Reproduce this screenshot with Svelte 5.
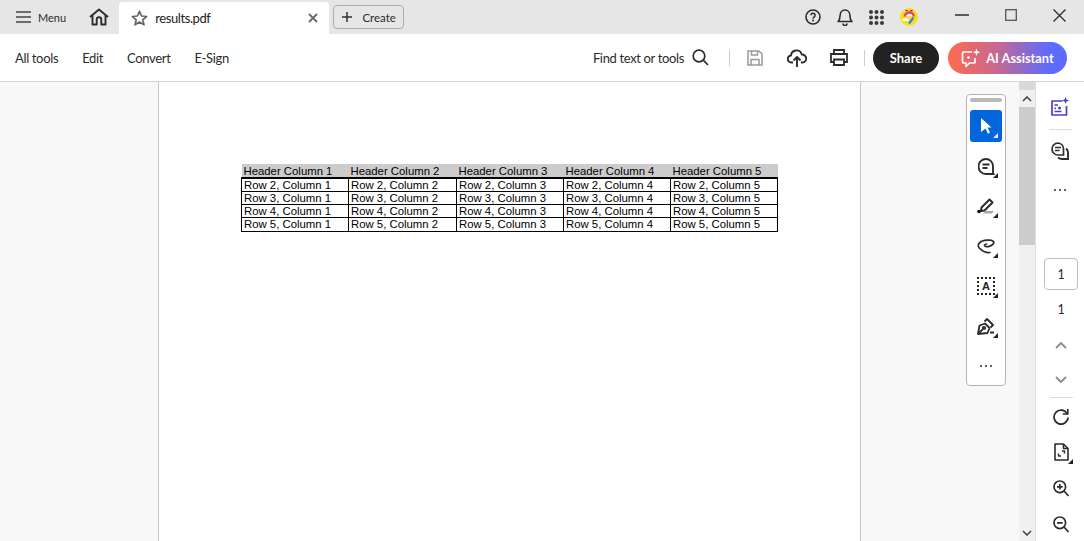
<script>
  const columns = [1, 2, 3, 4, 5];
  const rows = [2, 3, 4, 5];
  const colWidths = [107, 108, 107, 107, 107];
</script>

{#snippet corner()}
  <span class="corner"></span>
{/snippet}

<div class="app">
  <header class="titlebar">
    <button class="menu">
      <svg width="15" height="14" viewBox="0 0 15 14"><path d="M0 2h15M0 7h15M0 12h15" stroke="#444" stroke-width="1.700" fill="none"/></svg>
      <span>Menu</span>
    </button>
    <svg class="home" width="20" height="18" viewBox="0 0 20 18" fill="none" stroke="#2c2c2c" stroke-width="1.900" stroke-linejoin="round"><path d="M1 9 10 1.500 19 9M3.500 7.500v9h4.200v-5a2.300 2.300 0 0 1 4.600 0v5h4.200v-9"/></svg>
    <div class="tab">
      <svg width="17" height="16" viewBox="0 0 17 16" fill="none" stroke="#666" stroke-width="1.700" stroke-linejoin="round"><path d="M8.500 1.300 10.600 6l5 .5-3.800 3.300 1.200 5-4.500-2.700L4 14.800l1.200-5L1.400 6.500l5-.5z"/></svg>
      <span class="tab-name">results.pdf</span>
      <svg class="tab-close" width="10" height="10" viewBox="0 0 10 10"><path d="M1 1l8 8M9 1l-8 8" stroke="#6a6a6a" stroke-width="1.800"/></svg>
    </div>
    <button class="create">
      <svg width="12" height="12" viewBox="0 0 12 12"><path d="M6 1v10M1 6h10" stroke="#333" stroke-width="1.500"/></svg>
      <span>Create</span>
    </button>
    <div class="title-right">
      <svg width="16" height="16" viewBox="0 0 16 16" fill="none"><circle cx="8" cy="8" r="7" stroke="#2c2c2c" stroke-width="1.600"/><path d="M5.900 6.200a2.100 2 0 1 1 3.300 1.700C8.400 8.500 8 8.800 8 9.700" stroke="#2c2c2c" stroke-width="1.500"/><circle cx="8" cy="11.600" r="1" fill="#2c2c2c"/></svg>
      <svg width="16" height="18" viewBox="0 0 16 18" fill="none" stroke="#2c2c2c" stroke-width="1.600" stroke-linejoin="round"><path d="M1 13.500c1.600-1.300 2-2.500 2-5.500 0-3.500 2-6 5-6s5 2.500 5 6c0 3 .4 4.200 2 5.500z"/><path d="M6 15.500a2 2 0 0 0 4 0"/></svg>
      <svg width="15" height="15" viewBox="0 0 15 15" fill="#3a3a3a">
        {#each [2, 7.5, 13] as cy}
          {#each [2, 7.5, 13] as cx}
            <circle {cx} {cy} r="2"/>
          {/each}
        {/each}
      </svg>
      <svg width="18" height="18" viewBox="0 0 18 18"><circle cx="9" cy="9" r="9" fill="#f6e01c"/><path d="M3.500 8.500C4 4.500 7 3 9.500 3s5 1.500 5.500 5.500z" fill="#e8476f"/><path d="M6 8.500C6.500 6.500 8 6 9.500 6s3 .5 3 2.500z" fill="#fff"/><path d="M2 13c0-2.500 3-3.500 5-2.500 1.500 0 2 1 2 2.500z" fill="#fff"/><path d="M9 15.500l4.500-6" stroke="#2f86e0" stroke-width="2.200"/><path d="M5.500 2.500h2M10.500 2.500h2" stroke="#333" stroke-width="1"/></svg>
    </div>
    <div class="window-btns">
      <svg width="14" height="14" viewBox="0 0 14 14"><path d="M0 7h14" stroke="#2c2c2c" stroke-width="1.500"/></svg>
      <svg width="12" height="12" viewBox="0 0 12 12"><rect x=".7" y=".7" width="10.600" height="10.600" fill="none" stroke="#555" stroke-width="1.300"/></svg>
      <svg class="win-close" width="13" height="13" viewBox="0 0 13 13"><path d="M.5.500l12 12M12.500.500l-12 12" stroke="#2c2c2c" stroke-width="1.300"/></svg>
    </div>
  </header>

  <nav class="toolbar">
    <a>All tools</a>
    <a>Edit</a>
    <a>Convert</a>
    <a>E-Sign</a>
    <div class="toolbar-right">
      <span class="find">Find text or tools</span>
      <svg class="find-icon" width="17" height="17" viewBox="0 0 17 17" fill="none" stroke="#2c2c2c" stroke-width="1.700"><circle cx="7" cy="7" r="5.800"/><path d="M11.200 11.200 16 16"/></svg>
      <span class="sep first"></span>
      <svg class="save" width="16" height="16" viewBox="0 0 16 16" fill="none" stroke="#9a9a9a" stroke-width="1.500"><path d="M1 1h11l3 3v11H1z"/><path d="M4.500 1v4h6V1M4 15V9.500h8V15"/></svg>
      <svg class="upload" width="20" height="20" viewBox="0 0 20 20" fill="none" stroke="#2c2c2c" stroke-width="1.900" stroke-linejoin="round"><path d="M6 14.500H4.500a3.500 3.500 0 0 1-.5-7A5.500 5.500 0 0 1 14.800 6.500a4 4 0 0 1 .7 8H14"/><path d="M10 19V9.500M6.500 12.500 10 9l3.500 3.500"/></svg>
      <svg class="print" width="18" height="17" viewBox="0 0 18 17" fill="none" stroke="#2c2c2c" stroke-width="1.800"><path d="M4 5V1h10v4M4 13H1V5h16v8h-3"/><path d="M4 10.500h10V16H4z"/></svg>
      <span class="sep second"></span>
      <button class="share">Share</button>
      <button class="ai">
        <svg width="20" height="20" viewBox="0 0 20 20" fill="none" stroke="#fff" stroke-width="1.700" stroke-linejoin="round"><path d="M11 4H2.500a1 1 0 0 0-1 1v9a1 1 0 0 0 1 1H5v3.500L8.500 15H13a1 1 0 0 0 1-1v-4"/><circle cx="7.500" cy="9.500" r="1.300" fill="#fff" stroke="none"/><path d="M15.500.5l1 2.800 2.800 1-2.800 1-1 2.800-1-2.800-2.800-1 2.800-1z" fill="#fff" stroke="none"/></svg>
        <span>AI Assistant</span>
      </button>
    </div>
  </nav>

  <main class="workspace">
    <div class="gutter"></div>
    <section class="page">
      <table>
        <colgroup>
          {#each colWidths as w}
            <col style="width: {w}px" />
          {/each}
        </colgroup>
        <thead>
          <tr>
            {#each columns as c}
              <th>Header Column {c}</th>
            {/each}
          </tr>
        </thead>
        <tbody>
          {#each rows as r}
            <tr>
              {#each columns as c}
                <td>Row {r}, Column {c}</td>
              {/each}
            </tr>
          {/each}
        </tbody>
      </table>
    </section>

    <div class="canvas">
      <div class="quick-tools">
        <span class="grip"></span>
        <div class="qt active">
          <svg width="11" height="16" viewBox="0 0 11 16"><path d="M0 0l10.500 9.500H6.500L9 14.500l-2 1.200L4.500 10.500 0 14z" fill="#fff"/></svg>
          <span class="corner light"></span>
        </div>
        <div class="qt">
          <svg width="17" height="17" viewBox="0 0 17 17" fill="none" stroke="#2c2c2c" stroke-width="1.900"><path d="M8 1a7 7 0 1 0 0 15h7.500l-.5-1V8a7 7 0 0 0-7-7z"/><path d="M4.500 6.500h7M4.500 10h5"/></svg>
          {@render corner()}
        </div>
        <div class="qt">
          <svg width="18" height="16" viewBox="0 0 18 16" fill="none"><path d="M4.500 9.500 12.500 1.500l3 3-8 8-3.500.5z" stroke="#2c2c2c" stroke-width="2" stroke-linejoin="round"/><circle cx="2" cy="13.500" r="1.800" fill="#111"/><path d="M6 15.500l2.500-2.500H17l-2 2.500z" fill="#a8a8a8"/></svg>
          {@render corner()}
        </div>
        <div class="qt">
          <svg width="18" height="15" viewBox="0 0 18 15" fill="none" stroke="#2c2c2c" stroke-width="1.700" stroke-linecap="round"><path d="M4 10.500C1.500 9 .5 6.500 2 4.500 4 1.800 9 .8 13 1.200c3 .3 4.500 1.800 3.500 3.300C15 6.800 11 8.200 8.500 7.500 6.800 7 7.500 5 9.500 5M4 10.500c2 2 5.500 3.500 9 3"/></svg>
          {@render corner()}
        </div>
        <div class="qt">
          <span class="text-select">A</span>
          {@render corner()}
        </div>
        <div class="qt">
          <svg width="18" height="17" viewBox="0 0 18 17" fill="none" stroke="#2c2c2c" stroke-width="1.800" stroke-linejoin="round"><path d="M1 16 2.500 7.500 8 5.500l4.500 4.500L10.500 15z"/><path d="M7.500 3.500 10 1l6 6-2.500 2.500M1 16l4.500-4.500"/><circle cx="7" cy="10" r="1.200"/><path d="M13 14.500h4" stroke-width="2"/></svg>
          {@render corner()}
        </div>
        <div class="qt dots"><span></span><span></span><span></span></div>
      </div>
    </div>

    <div class="scrollbar">
      <span class="scroll-cap"></span>
      <span class="scroll-btn">
        <svg width="10" height="6" viewBox="0 0 10 6"><path d="M1 5l4-4 4 4" stroke="#444" stroke-width="1.600" fill="none"/></svg>
      </span>
      <span class="scroll-thumb"></span>
      <span class="scroll-btn bottom">
        <svg width="10" height="6" viewBox="0 0 10 6"><path d="M1 1l4 4 4-4" stroke="#444" stroke-width="1.600" fill="none"/></svg>
      </span>
    </div>

    <aside class="panel">
      <div class="top-icon first">
        <svg width="18" height="19" viewBox="0 0 18 19" fill="none" stroke="#4b3fc7" stroke-width="1.700" stroke-linejoin="round"><path d="M11.500 4H1v14h14.500V9"/><path d="M3.500 8h3.500M3.500 14.500h7M3.500 11.300h1.500"/><circle cx="8.500" cy="11" r="1.500" fill="#4b3fc7" stroke="none"/><path d="M14.500 0l1 2.500 2.500 1-2.500 1-1 2.500-1-2.500-2.500-1 2.500-1z" fill="#4b3fc7" stroke="none"/></svg>
      </div>
      <span class="rule top-icon"></span>
      <div class="top-icon comment">
        <svg width="18" height="18" viewBox="0 0 18 18" fill="none" stroke="#2c2c2c" stroke-width="1.700"><path d="M7 1a6 6 0 1 0 0 12h5.500V7A6 6 0 0 0 7 1z"/><path d="M4 5.500h6M4 8.500h4.500"/><path d="M15 6.500c1.300 1 2 2.500 2 4V17h-6a6 6 0 0 1-4-1.500" stroke-width="1.900"/></svg>
      </div>
      <div class="top-icon dots panel-dots"><span></span><span></span><span></span></div>
      <div class="page-box">1</div>
      <div class="page-total">1</div>
      <svg class="chev up" width="12" height="7" viewBox="0 0 12 7"><path d="M1 6l5-5 5 5" stroke="#8e8e8e" stroke-width="1.900" fill="none"/></svg>
      <svg class="chev down" width="12" height="7" viewBox="0 0 12 7"><path d="M1 1l5 5 5-5" stroke="#8e8e8e" stroke-width="1.900" fill="none"/></svg>
      <span class="rule lower"></span>
      <svg class="rotate" width="16" height="17" viewBox="0 0 16 17" fill="none" stroke="#2c2c2c" stroke-width="1.700"><path d="M14 5.500A7 7 0 1 0 15 9.500"/><path d="M14.800 1v5h-5" stroke-linejoin="round"/></svg>
      <div class="doc">
        <svg width="15" height="18" viewBox="0 0 15 18" fill="none" stroke="#2c2c2c" stroke-width="1.600" stroke-linejoin="round"><path d="M1 1h8.500L14 5.500V17H1z"/><path d="M9.500 1v4.500H14"/><path d="M8 8h2.500v2.500M7 13H4.500v-2.500" stroke-width="1.400"/></svg>
        <span class="corner"></span>
      </div>
      <svg class="zoom in" width="16" height="17" viewBox="0 0 16 17" fill="none" stroke="#2c2c2c" stroke-width="1.700"><circle cx="6.800" cy="6.800" r="5.800"/><path d="M11 11l4.500 5M4 6.800h5.600M6.800 4v5.600"/></svg>
      <svg class="zoom out" width="16" height="17" viewBox="0 0 16 17" fill="none" stroke="#2c2c2c" stroke-width="1.700"><circle cx="6.800" cy="6.800" r="5.800"/><path d="M11 11l4.500 5M4 6.800h5.600"/></svg>
    </aside>
  </main>
</div>

<style>
  :global(body) {
    margin: 0;
    overflow: hidden;
  }

  .app {
    width: 1084px;
    height: 541px;
    display: flex;
    flex-direction: column;
    overflow: hidden;
    font-family: Lato, "Noto Sans", sans-serif;
    color: #2c2c2c;
    background: #fff;
  }

  button {
    font: inherit;
    color: inherit;
    background: none;
    border: 0;
    padding: 0;
  }

  svg {
    display: block;
    flex: none;
  }

  /* Title bar */
  .titlebar {
    height: 34px;
    flex: none;
    background: #e6e6e6;
    display: flex;
    align-items: center;
    padding-left: 16px;
  }

  .menu {
    display: flex;
    align-items: center;
    gap: 7px;
    font-size: 11px;
  }

  .home {
    margin-left: 23px;
  }

  .tab {
    width: 210px;
    height: 32px;
    margin-left: 10px;
    align-self: flex-end;
    box-sizing: border-box;
    padding: 0 12px;
    display: flex;
    align-items: center;
    background: #fff;
    border-radius: 4px 4px 0 0;
  }

  .tab-name {
    margin-left: 7px;
    font-size: 13px;
    letter-spacing: -0.4px;
    color: #222;
  }

  .tab-close {
    margin-left: auto;
    margin-right: -1px;
  }

  .create {
    width: 71px;
    height: 24px;
    margin-left: 4px;
    box-sizing: border-box;
    border: 1px solid #adadad;
    border-radius: 4px;
    display: flex;
    align-items: center;
    justify-content: center;
    gap: 9px;
    font-size: 11.5px;
  }

  .title-right {
    margin-left: auto;
    display: flex;
    align-items: center;
    gap: 16px;
    margin-right: 37px;
  }

  .window-btns {
    display: flex;
    align-items: center;
    gap: 36px;
    margin-right: 18px;
    margin-top: -4px;
  }

  /* Tool bar */
  .toolbar {
    height: 47px;
    flex: none;
    border-bottom: 1px solid #d4d4d4;
    display: flex;
    align-items: center;
    gap: 24px;
    padding-left: 15px;
    font-size: 13px;
    letter-spacing: -0.35px;
  }

  .toolbar-right {
    margin-left: auto;
    margin-right: 17px;
    display: flex;
    align-items: center;
  }

  .find-icon {
    margin-left: 8px;
  }

  .sep {
    width: 1px;
    height: 16px;
    background: #cfcfcf;
  }

  .sep.first {
    margin-left: 20px;
  }

  .save {
    margin-left: 17px;
  }

  .upload {
    margin-left: 24px;
  }

  .print {
    margin-left: 23px;
  }

  .sep.second {
    margin-left: 16px;
  }

  .share {
    width: 66px;
    height: 32px;
    margin-left: 8px;
    background: #222;
    color: #fff;
    border-radius: 16px;
    font-weight: 700;
    font-size: 13px;
    letter-spacing: 0;
  }

  .ai {
    width: 119px;
    height: 32px;
    margin-left: 9px;
    border-radius: 16px;
    background: linear-gradient(90deg, #ff6a4d 0%, #c9688f 40%, #5d6bff 85%);
    color: #fff;
    font-weight: 700;
    font-size: 12.8px;
    letter-spacing: 0;
    display: flex;
    align-items: center;
    justify-content: center;
    gap: 5px;
  }

  /* Workspace */
  .workspace {
    flex: 1;
    min-height: 0;
    display: flex;
  }

  .gutter {
    width: 158px;
    flex: none;
    background: #f8f8f8;
    border-right: 1px solid #c8c8c8;
  }

  .page {
    width: 702px;
    flex: none;
    box-sizing: border-box;
    padding: 82px 0 0 82px;
    background: #fff;
    border-right: 1px solid #c8c8c8;
  }

  table {
    border-collapse: collapse;
    table-layout: fixed;
    width: 536px;
    font-family: "Liberation Sans", Arial, sans-serif;
    font-size: 11.35px;
    line-height: 12px;
    color: #000;
  }

  th {
    background: #ccc;
    font-weight: 400;
    text-align: left;
    padding: 1px 0 0 2px;
    height: 13px;
    box-sizing: border-box;
    border-bottom: 2px solid #000;
    white-space: nowrap;
    overflow: hidden;
  }

  td {
    padding: 0 0 0 2px;
    height: 13.2px;
    box-sizing: border-box;
    border: 1px solid #000;
    white-space: nowrap;
    overflow: hidden;
  }

  .canvas {
    width: 158px;
    flex: none;
    position: relative;
    background: #f8f8f8;
  }

  .quick-tools {
    position: absolute;
    top: 12px;
    right: 13px;
    width: 40px;
    height: 292px;
    box-sizing: border-box;
    background: #fff;
    border: 1px solid #b4b4b4;
    border-radius: 4px;
    padding: 3px 3px 0;
    display: flex;
    flex-direction: column;
    align-items: center;
  }

  .grip {
    width: 32px;
    height: 4px;
    background: #b9b9b9;
    border-radius: 2px;
    margin-bottom: 8px;
    flex: none;
  }

  .qt {
    position: relative;
    width: 32px;
    height: 32px;
    margin-bottom: 8px;
    flex: none;
    display: flex;
    align-items: center;
    justify-content: center;
  }

  .qt.active {
    background: #0265dc;
    border-radius: 3px;
  }

  .corner {
    position: absolute;
    right: 4px;
    bottom: 4px;
    width: 0;
    height: 0;
    border-style: solid;
    border-width: 0 0 5px 5px;
    border-color: transparent transparent #222 transparent;
  }

  .corner.light {
    border-bottom-color: #e4edfb;
  }

  .text-select {
    width: 18px;
    height: 18px;
    box-sizing: border-box;
    border: 2px dotted #222;
    display: flex;
    align-items: center;
    justify-content: center;
    font-family: "Liberation Sans", sans-serif;
    font-size: 11px;
    font-weight: 700;
    color: #222;
  }

  .dots {
    display: flex;
    align-items: center;
    justify-content: center;
    gap: 3px;
  }

  .dots span {
    width: 2px;
    height: 2px;
    border-radius: 50%;
    background: #2c2c2c;
  }

  /* Scrollbar */
  .scrollbar {
    width: 16px;
    flex: none;
    background: #f0f0f0;
    display: flex;
    flex-direction: column;
  }

  .scroll-cap {
    height: 8px;
    background: #d9d9d9;
  }

  .scroll-btn {
    height: 17px;
    display: flex;
    align-items: center;
    justify-content: center;
  }

  .scroll-thumb {
    height: 138px;
    background: #cdcdcd;
  }

  .scroll-btn.bottom {
    margin-top: auto;
    height: 16px;
  }

  /* Right panel */
  .panel {
    flex: 1;
    box-sizing: border-box;
    padding-left: 2px;
    background: #fff;
    border-left: 1px solid #e0e0e0;
    display: flex;
    flex-direction: column;
    align-items: center;
  }

  .top-icon {
    position: relative;
    left: -1px;
  }

  .top-icon.first {
    margin-top: 15px;
  }

  .rule {
    width: 23px;
    height: 1px;
    flex: none;
    background: #dcdcdc;
    margin-top: 13px;
  }

  .comment {
    margin-top: 12px;
  }

  .panel-dots {
    margin-top: 29px;
  }

  .page-box {
    width: 34px;
    height: 32px;
    margin-top: 67px;
    flex: none;
    box-sizing: border-box;
    border: 1px solid #bdbdbd;
    border-radius: 4px;
    display: flex;
    align-items: center;
    justify-content: center;
    font-size: 12.5px;
  }

  .page-total {
    margin-top: 12px;
    font-size: 12.5px;
    line-height: 15px;
  }

  .chev.up {
    margin-top: 25px;
  }

  .chev.down {
    margin-top: 27px;
  }

  .rule.lower {
    margin-top: 14px;
  }

  .rotate {
    margin-top: 10px;
  }

  .doc {
    position: relative;
    margin-top: 18px;
  }

  .doc .corner {
    right: -4px;
    bottom: -3px;
  }

  .zoom.in {
    margin-top: 19px;
  }

  .zoom.out {
    margin-top: 19px;
  }
</style>
